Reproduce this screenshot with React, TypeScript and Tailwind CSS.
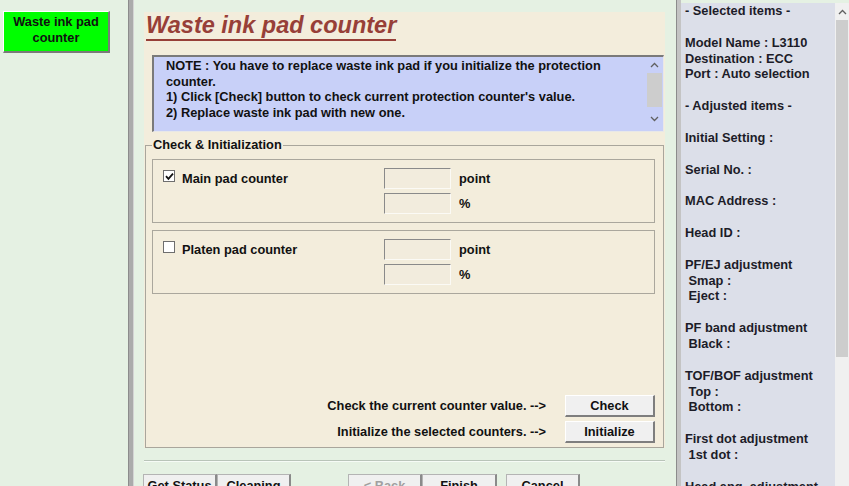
import React from "react"

const infoLines = [
  "- Selected items -",
  "",
  "Model Name : L3110",
  "Destination : ECC",
  "Port : Auto selection",
  "",
  "- Adjusted items -",
  "",
  "Initial Setting :",
  "",
  "Serial No. :",
  "",
  "MAC Address :",
  "",
  "Head ID :",
  "",
  "PF/EJ adjustment",
  " Smap :",
  " Eject :",
  "",
  "PF band adjustment",
  " Black :",
  "",
  "TOF/BOF adjustment",
  " Top :",
  " Bottom :",
  "",
  "First dot adjustment",
  " 1st dot :",
  "",
  "Head ang. adjustment",
]

function Chevron({ up }: { up?: boolean }) {
  return (
    <svg width="9" height="6" viewBox="0 0 9 6">
      <path
        d={up ? "M1 5L4.5 1.5L8 5" : "M1 1L4.5 4.5L8 1"}
        fill="none"
        stroke="#606060"
        strokeWidth="1.3"
      />
    </svg>
  )
}

function Checkbox({ checked }: { checked?: boolean }) {
  return (
    <div className="flex h-[12px] w-[12px] shrink-0 items-center justify-center border border-[#6e6e6e] bg-white">
      {checked && (
        <svg width="9" height="9" viewBox="0 0 9 9">
          <path d="M1 4.2L3.4 6.8L8 1.6" fill="none" stroke="#111" strokeWidth="1.8" />
        </svg>
      )}
    </div>
  )
}

function Field({ unit }: { unit: string }) {
  return (
    <div className="flex items-center gap-[8px]">
      <div className="h-[21px] w-[67px] border border-t-[#8a8a8a] border-l-[#8a8a8a] border-r-[#fbfaf5] border-b-[#fbfaf5] bg-[#f2ecdd]" />
      <span className="leading-[21px]">{unit}</span>
    </div>
  )
}

function CounterBox({ label, checked }: { label: string; checked?: boolean }) {
  return (
    <div className="flex h-[64px] shrink-0 border border-[#aaa79d] pl-[10px] pt-[8px]">
      <div className="flex w-[221px] items-start gap-[7px] pt-[2px]">
        <Checkbox checked={checked} />
        <span className="mt-[1px] leading-[16px]">{label}</span>
      </div>
      <div className="flex flex-col gap-[4px]">
        <Field unit="point" />
        <Field unit="%" />
      </div>
    </div>
  )
}

function WinButton({ children }: { children: React.ReactNode }) {
  return (
    <button className="flex h-[22px] w-[90px] items-center justify-center border border-t-white border-l-white border-r-2 border-b-2 border-r-[#7e7e7e] border-b-[#7e7e7e] bg-[#f0f0f0] font-bold text-[#111]">
      {children}
    </button>
  )
}

function BottomButton({ children, disabled, className = "" }: { children: React.ReactNode; disabled?: boolean; className?: string }) {
  return (
    <button
      className={`flex h-[24px] items-center justify-center border border-[#b4b4b4] border-r-2 border-r-[#8a8a8a] bg-[#f0f0f0] font-bold ${
        disabled ? "text-[#a0a0a0]" : "text-[#111]"
      } ${className}`}
    >
      {children}
    </button>
  )
}

export default function App() {
  return (
    <div className="flex h-[486px] w-[849px] overflow-hidden bg-[#e5f1e3] font-['Liberation_Sans',Arial,sans-serif] text-[12.8px] font-bold text-[#111]">
      {/* left menu */}
      <div className="w-[128px] shrink-0 pl-[3px] pt-[11px]">
        <button className="flex h-[42px] w-[107px] flex-col items-center justify-center border border-t-white border-l-white border-r-2 border-b-2 border-r-[#7a7a7a] border-b-[#7a7a7a] bg-[#00ff00] pb-[4px] leading-[16px] text-[#111]">
          <span>Waste ink pad</span>
          <span>counter</span>
        </button>
      </div>
      <div className="h-full w-[6px] shrink-0 border-l border-r border-l-[#8c8c8c] border-r-[#d4d4d4] bg-[#ababab]" />

      {/* main */}
      <div className="flex w-[542px] shrink-0 flex-col pl-[10px] pt-[12px]">
        <div className="flex h-[436px] w-[521px] shrink-0 flex-col bg-[#f3eddc]">
          <div className="shrink-0 pl-[2px]">
            <span className="inline-block border-b-2 border-[#973f38] text-[23.5px] italic leading-[27px] text-[#973f38]">
              Waste ink pad counter
            </span>
          </div>

          <div className="ml-[8px] mr-[1px] mt-[14px] flex h-[77px] shrink-0 border-l-2 border-t-2 border-r border-b border-l-[#7a7a7a] border-t-[#7a7a7a] border-r-[#e8e8e8] border-b-[#e8e8e8] bg-[#c8d0f8]">
            <div className="flex-1 pl-[12px] pt-[1px] leading-[15.7px]">
              <p>NOTE : You have to replace waste ink pad if you initialize the protection</p>
              <p>counter.</p>
              <p>1) Click [Check] button to check current protection counter's value.</p>
              <p>2) Replace waste ink pad with new one.</p>
            </div>
            <div className="flex w-[17px] flex-col items-center">
              <div className="flex h-[16px] items-center">
                <Chevron up />
              </div>
              <div className="h-[34px] w-[15px] bg-[#cdcdcd]" />
              <div className="flex flex-1 items-center">
                <Chevron />
              </div>
            </div>
          </div>

          <fieldset className="ml-[1px] mr-[1px] mt-[5px] flex-1 border border-[#a9a69c] pl-[6px] pr-[8px]">
            <legend className="px-[1px] leading-[16px]">Check &amp; Initialization</legend>
            <div className="mt-[6px] flex flex-col gap-[7px]">
              <CounterBox label="Main pad counter" checked />
              <CounterBox label="Platen pad counter" />
            </div>
            <div className="mt-[101px] flex flex-col gap-[4px]">
              <div className="flex items-center justify-end gap-[19px]">
                <span>Check the current counter value. --&gt;</span>
                <WinButton>Check</WinButton>
              </div>
              <div className="flex items-center justify-end gap-[19px]">
                <span>Initialize the selected counters. --&gt;</span>
                <WinButton>Initialize</WinButton>
              </div>
            </div>
          </fieldset>
        </div>

        <div className="mt-[12px] w-[521px] shrink-0 border-t border-b border-t-[#b9c4b9] border-b-[#f6fbf6]" />

        <div className="-ml-[1px] mt-[12px] flex shrink-0">
          <BottomButton className="w-[74px]">Get Status</BottomButton>
          <BottomButton className="w-[74px]">Cleaning</BottomButton>
          <BottomButton className="ml-[57px] w-[74px]" disabled>
            &lt; Back
          </BottomButton>
          <BottomButton className="w-[75px]">Finish</BottomButton>
          <BottomButton className="ml-[9px] w-[74px]">Cancel</BottomButton>
        </div>
      </div>

      {/* right info */}
      <div className="h-full w-[5px] shrink-0 border-l border-l-[#8c8c8c] bg-[#c4c4c4]" />
      <div className="mt-[3px] flex flex-1">
        <div className="w-[154px] bg-[#dcdfe9] pl-[4px] leading-[15.87px] text-[#1c1c28]">
          {infoLines.map((line, i) => (
            <div key={i} className="h-[15.87px] whitespace-pre">
              {line}
            </div>
          ))}
        </div>
        <div className="flex w-[14px] flex-col items-center bg-[#f0f0f0]">
          <div className="flex h-[17px] items-center">
            <Chevron up />
          </div>
          <div className="h-[337px] w-[12px] bg-[#cdcdcd]" />
        </div>
      </div>
    </div>
  )
}
